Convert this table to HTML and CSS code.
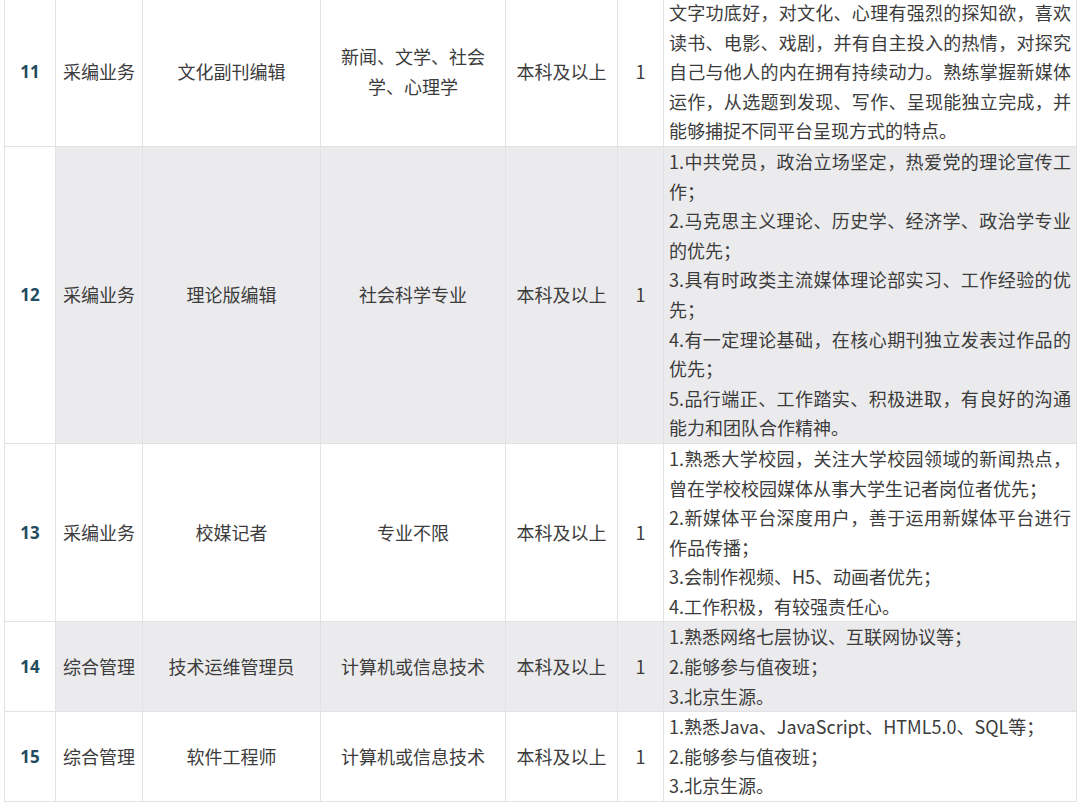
FILE: index.html
```html
<!DOCTYPE html>
<html lang="zh-CN">
<head>
<meta charset="utf-8">
<title>招聘岗位</title>
<link rel="stylesheet" href="styles.css">
</head>
<body>
<table class="jobs">
  <colgroup>
    <col class="c-num"><col class="c-cat"><col class="c-pos"><col class="c-major"><col class="c-edu"><col class="c-cnt"><col class="c-req">
  </colgroup>
  <tbody>
    <tr>
      <td class="num">11</td>
      <td class="ctr">采编业务</td>
      <td class="ctr">文化副刊编辑</td>
      <td class="ctr major">新闻、文学、社会学、心理学</td>
      <td class="ctr">本科及以上</td>
      <td class="ctr">1</td>
      <td class="req"><p>文字功底好，对文化、心理有强烈的探知欲，喜欢读书、电影、戏剧，并有自主投入的热情，对探究自己与他人的内在拥有持续动力。熟练掌握新媒体运作，从选题到发现、写作、呈现能独立完成，并能够捕捉不同平台呈现方式的特点。</p></td>
    </tr>
    <tr class="alt">
      <td class="num">12</td>
      <td class="ctr">采编业务</td>
      <td class="ctr">理论版编辑</td>
      <td class="ctr major">社会科学专业</td>
      <td class="ctr">本科及以上</td>
      <td class="ctr">1</td>
      <td class="req">
        <p>1.中共党员，政治立场坚定，热爱党的理论宣传工作；</p>
        <p>2.马克思主义理论、历史学、经济学、政治学专业的优先；</p>
        <p>3.具有时政类主流媒体理论部实习、工作经验的优先；</p>
        <p>4.有一定理论基础，在核心期刊独立发表过作品的优先；</p>
        <p>5.品行端正、工作踏实、积极进取，有良好的沟通能力和团队合作精神。</p>
      </td>
    </tr>
    <tr>
      <td class="num">13</td>
      <td class="ctr">采编业务</td>
      <td class="ctr">校媒记者</td>
      <td class="ctr major">专业不限</td>
      <td class="ctr">本科及以上</td>
      <td class="ctr">1</td>
      <td class="req">
        <p>1.熟悉大学校园，关注大学校园领域的新闻热点，曾在学校校园媒体从事大学生记者岗位者优先；</p>
        <p>2.新媒体平台深度用户，善于运用新媒体平台进行作品传播；</p>
        <p>3.会制作视频、H5、动画者优先；</p>
        <p>4.工作积极，有较强责任心。</p>
      </td>
    </tr>
    <tr class="alt">
      <td class="num">14</td>
      <td class="ctr">综合管理</td>
      <td class="ctr">技术运维管理员</td>
      <td class="ctr major">计算机或信息技术</td>
      <td class="ctr">本科及以上</td>
      <td class="ctr">1</td>
      <td class="req">
        <p>1.熟悉网络七层协议、互联网协议等；</p>
        <p>2.能够参与值夜班；</p>
        <p>3.北京生源。</p>
      </td>
    </tr>
    <tr>
      <td class="num">15</td>
      <td class="ctr">综合管理</td>
      <td class="ctr">软件工程师</td>
      <td class="ctr major">计算机或信息技术</td>
      <td class="ctr">本科及以上</td>
      <td class="ctr">1</td>
      <td class="req">
        <p>1.熟悉Java、JavaScript、HTML5.0、SQL等；</p>
        <p>2.能够参与值夜班；</p>
        <p>3.北京生源。</p>
      </td>
    </tr>
  </tbody>
</table>
</body>
</html>
```
FILE: styles.css
```css
html, body {
  margin: 0;
  padding: 0;
  background: #ffffff;
}

body {
  font-family: "Noto Sans CJK SC", "Noto Sans", sans-serif;
  font-size: 18px;
  color: #3c3c3c;
  overflow: hidden;
}

.jobs {
  margin: -3px 0 0 4px;
  width: 1072px;
  table-layout: fixed;
  border-collapse: collapse;
}

.c-num { width: 51px; }
.c-cat { width: 87px; }
.c-pos { width: 178px; }
.c-major { width: 185px; }
.c-edu { width: 112px; }
.c-cnt { width: 46px; }
.c-req { width: 413px; }

.jobs td {
  border: 1px solid #e2e2e4;
  padding: 0 4px;
  line-height: 29.6px;
  vertical-align: middle;
}

.jobs tr.alt td {
  background: #ebebed;
}

.jobs tr.alt td.num {
  background: #ffffff;
}

.num {
  text-align: center;
  font-family: "Noto Sans", "Noto Sans CJK SC", sans-serif;
  font-weight: 700;
  font-size: 17px;
  color: #1f4c5e;
}

.ctr {
  text-align: center;
}

.major {
  padding: 0 12px;
}

.jobs td.req {
  padding: 0 5px 0 5px;
  text-align: justify;
}

.req p {
  margin: 0;
}
```
